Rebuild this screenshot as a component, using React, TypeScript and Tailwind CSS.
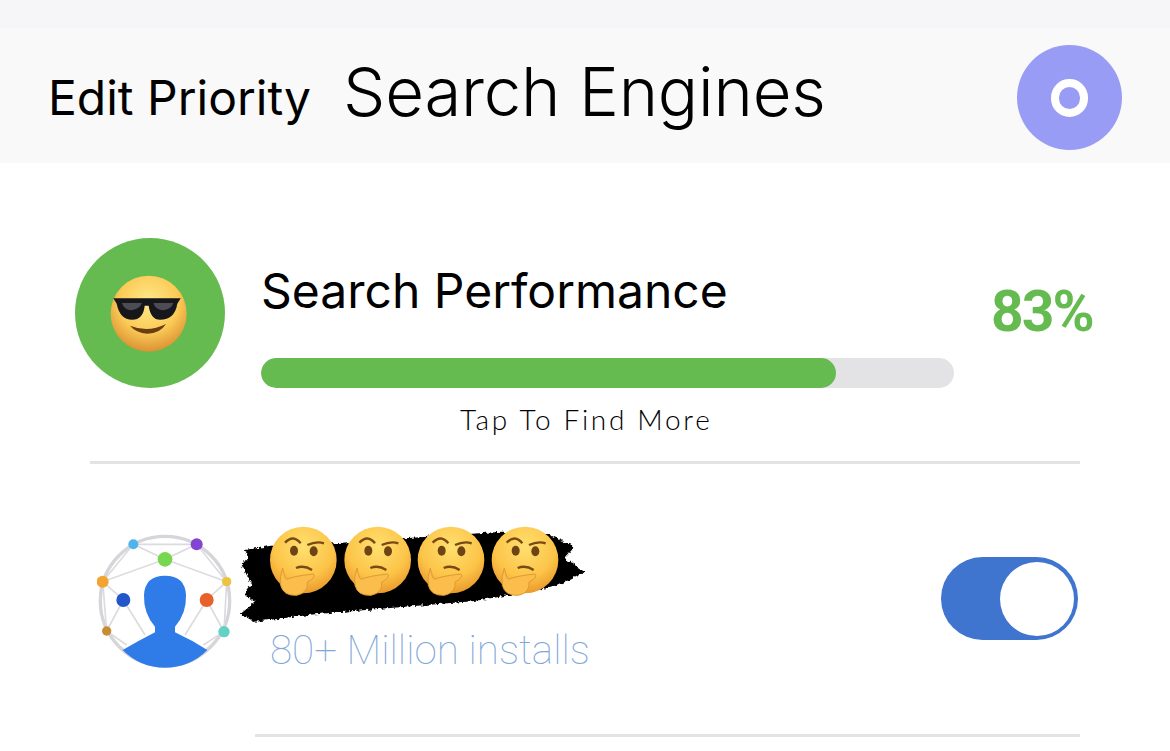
const Sunglasses = () => (
    <svg width="80" height="80" viewBox="0 0 240 240" className="mt-[4px]">
        <defs>
            <radialGradient id="coolFace" cx="50%" cy="35%" r="65%">
                <stop offset="0%" stopColor="#ffe98a" />
                <stop offset="60%" stopColor="#fbcb57" />
                <stop offset="100%" stopColor="#dc9233" />
            </radialGradient>
        </defs>
        <circle cx="116" cy="116" r="114" fill="url(#coolFace)" />
        <path d="M10 70 L212 70 L202 86 Q194 134 150 134 Q122 134 116 92 L104 92 Q100 134 66 134 Q30 134 20 86 Z" fill="#17171b" />
        <path d="M36 84 L96 84 Q88 104 62 106 Q42 104 36 84Z M130 84 L190 84 Q184 104 158 106 Q136 104 130 84Z" fill="#4c4c55" />
        <path d="M60 152 Q114 174 168 147 Q150 176 112 176 Q78 174 60 152Z" fill="#6a3d12" />
    </svg>
);

const ContactIcon = () => (
    <svg width="135" height="135" viewBox="51 54 405 405" className="shrink-0">
        <circle cx="255" cy="258" r="194" fill="none" stroke="#d5d5da" strokeWidth="10" />
        <g stroke="#dcdce0" strokeWidth="5" fill="none">
            <path d="M160 88 L350 88 L255 133 Z" />
            <path d="M68 200 L255 133 L440 200" />
            <path d="M160 88 L68 200 L80 348 L130 255 L68 200" />
            <path d="M350 88 L440 200 L432 350 L380 255 L440 200" />
            <path d="M130 255 L195 360 M380 255 L315 360 M80 348 L140 390 M432 350 L370 390" />
        </g>
        <path d="M128 405 Q180 375 225 352 L225 335 Q190 295 192 240 Q195 182 255 182 Q315 182 318 240 Q320 295 285 335 L285 352 Q335 375 382 405 Q330 458 255 458 Q180 458 128 405Z" fill="#2f7be8" />
        <circle cx="160" cy="88" r="15" fill="#4fb4ea" />
        <circle cx="350" cy="88" r="18" fill="#8543d2" />
        <circle cx="255" cy="133" r="22" fill="#76d84e" />
        <circle cx="68" cy="200" r="18" fill="#f3a32f" />
        <circle cx="440" cy="200" r="14" fill="#ecc33f" />
        <circle cx="130" cy="255" r="21" fill="#2157c9" />
        <circle cx="380" cy="255" r="21" fill="#e8602c" />
        <circle cx="80" cy="348" r="14" fill="#c68d32" />
        <circle cx="432" cy="350" r="17" fill="#62d1c6" />
    </svg>
);

const ThinkFace = ({ x }: { x: number }) => (
    <g transform={`translate(${x} 135)`}>
        <circle cx="0" cy="0" r="100" fill="url(#thinkFace)" />
        <path d="M-55 -52 Q-30 -78 -8 -50" fill="none" stroke="#7a4a14" strokeWidth="7" />
        <path d="M12 -45 Q40 -58 62 -50" fill="none" stroke="#7a4a14" strokeWidth="7" />
        <ellipse cx="-28" cy="-28" rx="12" ry="15" fill="#6e4414" />
        <ellipse cx="31" cy="-26" rx="12" ry="15" fill="#6e4414" />
        <path d="M-22 24 Q2 14 26 30" fill="none" stroke="#7a4a14" strokeWidth="7" />
        <path d="M-62 24 Q-56 54 -50 58 Q-28 48 30 42 Q40 52 12 66 Q16 98 -20 106 Q-60 108 -68 76 Q-72 50 -62 24Z" fill="#fbbd4c" stroke="#e09a32" strokeWidth="3" />
    </g>
);

const BrushName = () => (
    <svg width="360" height="110" viewBox="0 0 1080 330" className="shrink-0">
        <defs>
            <radialGradient id="thinkFace" cx="50%" cy="30%" r="70%">
                <stop offset="0%" stopColor="#ffe070" />
                <stop offset="65%" stopColor="#fcc448" />
                <stop offset="100%" stopColor="#ea9a2c" />
            </radialGradient>
            <filter id="rough" x="-5%" y="-10%" width="110%" height="120%" colorInterpolationFilters="sRGB">
                <feTurbulence type="fractalNoise" baseFrequency="0.09" numOctaves="3" seed="4" result="n" />
                <feDisplacementMap in="SourceGraphic" in2="n" scale="16" xChannelSelector="R" yChannelSelector="G" />
            </filter>
        </defs>
        <path
            d="M30 105 L110 92 L300 85 L510 70 L800 50 L945 60 L1018 95 L990 130 L1050 172 L960 215 L720 258 L430 282 L240 298 L60 320 L15 298 L60 262 L30 238 L50 210 L20 150 L40 125 Z"
            fill="#000"
            filter="url(#rough)"
        />
        <ThinkFace x={205} />
        <ThinkFace x={428} />
        <ThinkFace x={648} />
        <ThinkFace x={870} />
    </svg>
);

export default function App() {
    const percent = 83;

    return (
        <div className="w-[1170px] h-[751px] overflow-hidden bg-white text-black font-['Inter',sans-serif]">
            <div className="h-[28px] bg-[#f6f6f8]" />
            <header className="h-[135px] bg-[#f9f9fa] flex items-center pl-[48px] pr-[48px]">
                <span className="w-[295px] shrink-0 text-[48px] leading-none mt-[4px]">Edit Priority</span>
                <h1 className="text-[67px] leading-none font-light tracking-[-0.2px] -mt-[8px]">Search Engines</h1>
                <div className="ml-auto mt-[4px] w-[105px] h-[105px] rounded-full bg-[#999cf5] flex items-center justify-center">
                    <div className="w-[37px] h-[38px] rounded-full border-[8px] border-white" />
                </div>
            </header>

            <section className="flex pl-[75px] pt-[75px] h-[298px]">
                <div className="w-[150px] h-[150px] rounded-full bg-[#66bb50] flex items-center justify-center shrink-0">
                    <Sunglasses />
                </div>
                <div className="ml-[36px] w-[693px] shrink-0">
                    <div className="text-[48px] leading-none pt-[29px] h-[120px]">Search Performance</div>
                    <div className="h-[30px] rounded-full bg-[#e3e3e5] overflow-hidden">
                        <div className="h-full rounded-full bg-[#66bb50]" style={{ width: `${percent}%` }} />
                    </div>
                    <div className="mt-[17px] pl-[199px] text-[28px] leading-none tracking-[2.7px] font-['Lato',sans-serif] font-light">Tap To Find More</div>
                </div>
                <div className="ml-[37px] mt-[45px] text-[57px] leading-none font-bold text-[#66bb50] tracking-[-2px] font-['Roboto',sans-serif]">{percent}%</div>
            </section>
            <div className="ml-[90px] w-[990px] h-[3px] bg-[#e3e3e5]" />

            <section className="flex pl-[97px] h-[270px]">
                <div className="pt-[69px]">
                    <ContactIcon />
                </div>
                <div className="ml-[3px] pt-[51px]">
                    <BrushName />
                    <div className="pl-[35px] mt-[6px] text-[40.4px] leading-none text-[#7ea6d8] font-['Roboto',sans-serif] font-thin">80+ Million installs</div>
                </div>
                <div className="ml-[346px] mt-[93px] w-[137px] h-[83px] rounded-full bg-[#3f74cf] flex items-center justify-end pr-[4px]">
                    <div className="w-[74px] h-[74px] rounded-full bg-white" />
                </div>
            </section>
            <div className="ml-[255px] w-[825px] h-[3px] bg-[#e3e3e5]" />
        </div>
    );
}
